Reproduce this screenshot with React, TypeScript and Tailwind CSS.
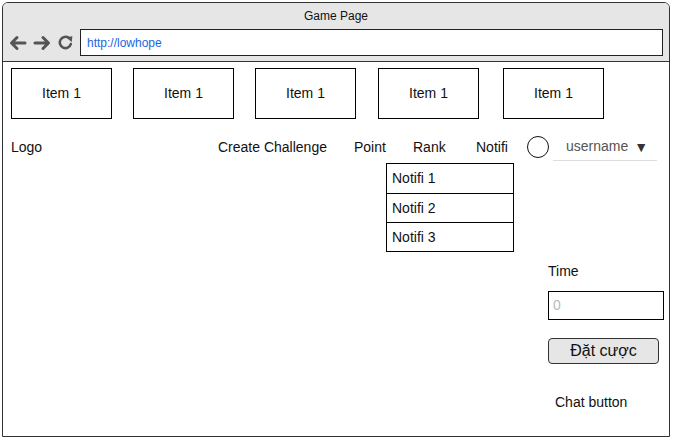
import React from 'react'

const items = [
    { label: 'Item 1', cls: 'ml-0' },
    { label: 'Item 1', cls: 'ml-[21px]' },
    { label: 'Item 1', cls: 'ml-[21px]' },
    { label: 'Item 1', cls: 'ml-[22px]' },
    { label: 'Item 1', cls: 'ml-[24px]' },
]

const navLinks = [
    { label: 'Logo', cls: 'w-[207px]' },
    { label: 'Create Challenge', cls: 'w-[136px]' },
    { label: 'Point', cls: 'w-[59px]' },
    { label: 'Rank', cls: 'w-[63px]' },
    { label: 'Notifi', cls: 'w-[51px]' },
]

function BrowserBar() {
    return (
        <div className="h-[59px] bg-[#e6e6e6] border-b border-[#333] shrink-0">
            <p className="pt-[6px] text-[12px] leading-[15px] text-center text-[#111]">Game Page</p>
            <div className="flex items-center mt-[5px]">
                <div className="flex items-center gap-[6px] pl-[6px] w-[77px]">
                    <svg width="18" height="16" viewBox="0 0 18 16" fill="none" stroke="#555" strokeWidth="3" strokeLinecap="round" strokeLinejoin="round">
                        <path d="M16 8H3M8 2.5L2.5 8 8 13.5" />
                    </svg>
                    <svg width="18" height="16" viewBox="0 0 18 16" fill="none" stroke="#555" strokeWidth="3" strokeLinecap="round" strokeLinejoin="round">
                        <path d="M2 8h13M10 2.5L15.5 8 10 13.5" />
                    </svg>
                    <svg width="17" height="17" viewBox="0 0 16 16" fill="none">
                        <path d="M13 9.5A5.3 5.3 0 1 1 11.2 3.8" stroke="#555" strokeWidth="2.4" strokeLinecap="round" />
                        <path d="M8.8 2.8L14.5 2 13.8 7.8z" fill="#555" />
                    </svg>
                </div>
                <div className="w-[583px] h-[27px] bg-white border border-[#222] flex items-center pl-[6px]">
                    <span className="text-[12px] text-[#1a66e0]">http://lowhope</span>
                </div>
            </div>
        </div>
    )
}

export default function App() {
    return (
        <div className="w-[674px] h-[440px] bg-white pt-[2px] pl-[2px]" style={{ fontFamily: '"Liberation Sans", Arial, sans-serif' }}>
            <div className="w-[668px] h-[435px] border border-[#333] rounded-t-[6px] overflow-hidden flex flex-col">
                <BrowserBar />
                <div className="relative flex-1 pl-[8px] pt-[6px] text-[14px] text-[#111]">
                    <div className="flex">
                        {items.map((it, i) => (
                            <div key={i} className={`${it.cls} w-[101px] h-[51px] border border-black flex items-center justify-center`}>
                                {it.label}
                            </div>
                        ))}
                    </div>

                    <div className="flex items-center mt-[16px] h-[24px]">
                        {navLinks.map((l) => (
                            <span key={l.label} className={`${l.cls} leading-[16px]`}>{l.label}</span>
                        ))}
                        <span className="w-[26px] flex items-center">
                            <span className="w-[22px] h-[22px] rounded-full border border-[#111]"></span>
                        </span>
                        <div className="w-[104px] h-[26px] mt-[2px] border-b border-[#ddd] flex items-center pl-[13px] pb-[2px] text-[#555]">
                            <span>username</span>
                            <span className="ml-[6px] text-[14px] leading-[16px] text-[#333]">▼</span>
                        </div>
                    </div>

                    <div className="absolute left-[383px] top-[101px] w-[128px] border border-black bg-white">
                        {['Notifi 1', 'Notifi 2', 'Notifi 3'].map((n, i) => (
                            <div key={n} className={`h-[29px] flex items-center pl-[5px] ${i > 0 ? 'border-t border-black' : ''}`}>{n}</div>
                        ))}
                    </div>

                    <div className="ml-[537px] mt-[104px] flex flex-col items-start">
                        <span className="leading-[16px]">Time</span>
                        <div className="mt-[12px] w-[116px] h-[29px] border border-black flex items-center pl-[4px] text-[#bbb]">0</div>
                        <button className="mt-[18px] w-[111px] h-[26px] rounded-[4px] border border-[#333] bg-[#e6e6e6] text-[16px] leading-[20px] text-[#111]">Đặt cược</button>
                        <span className="mt-[30px] ml-[7px] leading-[16px]">Chat button</span>
                    </div>
                </div>
            </div>
        </div>
    )
}
